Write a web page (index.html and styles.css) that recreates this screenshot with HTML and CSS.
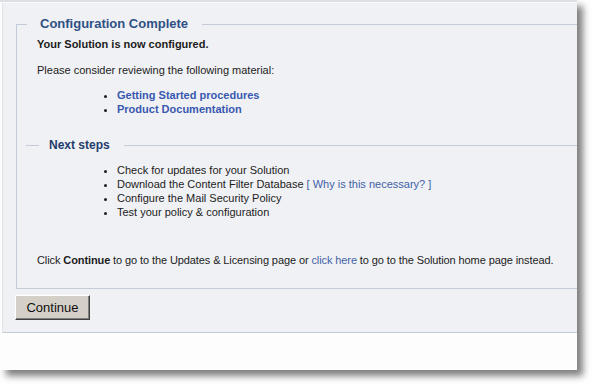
FILE: index.html
```html
<!DOCTYPE html>
<html lang="en">

<head>
	<meta charset="UTF-8">
	<title>Configuration Complete</title>
	<link rel="stylesheet" href="styles.css">
</head>

<body>
	<div class="window">
		<div class="topbar"></div>
		<div class="panel">
			<fieldset class="box">
				<legend>Configuration Complete</legend>
				<p class="lead">Your Solution is now configured.</p>
				<p class="intro">Please consider reviewing the following material:</p>
				<ul class="links">
					<li><a href="#">Getting Started procedures</a></li>
					<li><a href="#">Product Documentation</a></li>
				</ul>

				<fieldset class="steps">
					<legend>Next steps</legend>
					<ul class="step-list">
						<li>Check for updates for your Solution</li>
						<li>Download the Content Filter Database <a href="#" class="why">[ Why is this necessary? ]</a></li>
						<li>Configure the Mail Security Policy</li>
						<li>Test your policy &amp; configuration</li>
					</ul>
				</fieldset>

				<p class="outro">Click <b>Continue</b> to go to the Updates &amp; Licensing page or <a href="#" class="plain">click here</a> to go to the Solution home page instead.</p>
			</fieldset>
			<button type="button" class="continue-btn">Continue</button>
		</div>
	</div>
</body>

</html>
```

FILE: styles.css
```css
* {
	box-sizing: border-box;
}

html,
body {
	height: 386px;
}

body {
	margin: 0;
	background-color: #fff;
	font-family: 'Liberation Sans', Arial, sans-serif;
	font-size: 11px;
	color: #1c1c1c;
}

.window {
	width: 577px;
	height: 370px;
	background-color: #fdfdfd;
	box-shadow: 6px 6px 7px rgba(0, 0, 0, 0.5);
	overflow: hidden;
}

.topbar {
	height: 3px;
	background-color: #dcdfe4;
	border-bottom: 1px solid #f9fafb;
}

.panel {
	margin-left: 2px;
	padding: 13px 0 12px 13px;
	background-color: #f0f1f4;
	border-left: 1px solid #e0e3e8;
	border-bottom: 1px solid #c3cbd5;
}

.box {
	margin: 0;
	padding: 0 0 21px 20px;
	border: 1px solid #c3ccd8;
	border-right: none;
	min-width: 0;
}

.box > legend {
	margin-left: -10px;
	padding: 0 14px 0 13px;
	font-size: 13px;
	font-weight: bold;
	line-height: 16px;
	color: #2e5085;
}

p {
	margin: 0;
	line-height: 14px;
}

.lead {
	margin-top: 5px;
	font-weight: bold;
}

.intro {
	margin-top: 12px;
}

ul {
	margin: 0;
	padding-left: 80px;
	line-height: 14px;
}

.links {
	margin-top: 11px;
}

a {
	color: #3858b0;
	text-decoration: none;
}

.links a {
	font-weight: bold;
}

.steps {
	margin: 22px 0 0 -11px;
	padding: 0 0 0 11px;
	border: none;
	border-top: 1px solid #c3ccd8;
	min-width: 0;
}

.steps > legend {
	margin-left: 2px;
	padding: 0 14px 0 10px;
	font-size: 12px;
	font-weight: bold;
	line-height: 14px;
	color: #1f3c6c;
}

.step-list {
	margin-top: 11px;
}

.why,
.plain {
	color: #4262a8;
}

.outro {
	margin-top: 34px;
	letter-spacing: -0.1px;
}

.continue-btn {
	display: block;
	margin: 6px 0 0 -1px;
	width: 75px;
	height: 25px;
	padding: 0;
	font-family: 'Liberation Sans', Arial, sans-serif;
	font-size: 13px;
	color: #111;
	background-color: #d4d0c8;
	border: 1px solid;
	border-color: #fff #404040 #404040 #fff;
	box-shadow: inset -1px -1px #808080;
	cursor: pointer;
}
```
